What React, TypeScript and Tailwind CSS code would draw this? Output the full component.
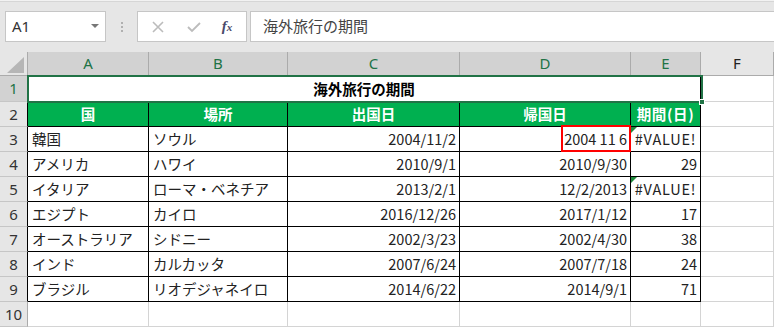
import React from "react";

const JP = "font-['Noto_Sans_CJK_JP',sans-serif]";

const colW = [121, 139, 172, 171, 70, 73];
const letters = ["A", "B", "C", "D", "E", "F"];

const data: string[][] = [
  ["韓国", "ソウル", "2004/11/2", "2004 11 6", "#VALUE!"],
  ["アメリカ", "ハワイ", "2010/9/1", "2010/9/30", "29"],
  ["イタリア", "ローマ・ベネチア", "2013/2/1", "12/2/2013", "#VALUE!"],
  ["エジプト", "カイロ", "2016/12/26", "2017/1/12", "17"],
  ["オーストラリア", "シドニー", "2002/3/23", "2002/4/30", "38"],
  ["インド", "カルカッタ", "2007/6/24", "2007/7/18", "24"],
  ["ブラジル", "リオデジャネイロ", "2014/6/22", "2014/9/1", "71"],
];

function RowHeader({ n, selected, black }: { n: number; selected?: boolean; black?: boolean }) {
  return (
    <div
      className={`w-[28px] shrink-0 flex items-center justify-center border-b border-b-[#c6c6c6] border-r font-['Noto_Sans',sans-serif] text-[15px] ${
        selected ? "bg-[#d2d2d2] text-[#217346]" : "bg-[#e6e6e6] text-[#333]"
      } ${black ? "border-r-black" : "border-r-[#ababab]"}`}
    >
      {n}
    </div>
  );
}

function DataRow({ n, row }: { n: number; row: string[] }) {
  return (
    <div className="flex h-[25px]">
      <RowHeader n={n} black />
      {row.map((t, i) => {
        const isErr = i === 4 && t.startsWith("#");
        const align = i < 2 ? "justify-start pl-[4px]" : isErr ? "justify-center tracking-[0.8px]" : "justify-end pr-[3px]";
        return (
          <div
            key={i}
            style={{ width: colW[i] }}
            className={`relative shrink-0 bg-white border-r border-b border-black flex items-center ${align} ${JP} text-[14.5px] text-[#222] whitespace-nowrap overflow-visible`}
          >
            {isErr && (
              <div className="absolute left-0 top-0 w-0 h-0 border-t-[6px] border-t-[#1e8a3c] border-r-[6px] border-r-transparent" />
            )}
            {t}
          </div>
        );
      })}
      <div style={{ width: colW[5] }} className="shrink-0 bg-white border-r border-b border-[#d4d4d4]" />
    </div>
  );
}

export default function App() {
  return (
    <div className="relative w-[774px] h-[327px] overflow-hidden bg-[#e6e6e6]">
      {/* top edge */}
      <div className="h-[1px] bg-[#f2f2f2]" />
      <div className="h-[1px] bg-[#d6d6d6]" />
      {/* toolbar */}
      <div className="h-[50px] flex items-start pt-[9px]">
        <div className="ml-[5px] w-[101px] h-[31px] bg-white border border-[#c6c6c6] flex items-center justify-between pl-[6px] pr-[6px]">
          <span className="font-['Noto_Sans',sans-serif] text-[15px] text-[#333]">A1</span>
          <svg width="8" height="5" viewBox="0 0 8 5">
            <path d="M0 0 L8 0 L4 4 Z" fill="#777" />
          </svg>
        </div>
        <div className="w-[31px] h-[31px] flex flex-col items-center justify-center gap-[2px]">
          <div className="w-[2px] h-[2px] bg-[#b0b0b0]" />
          <div className="w-[2px] h-[2px] bg-[#b0b0b0]" />
          <div className="w-[2px] h-[2px] bg-[#b0b0b0]" />
        </div>
        <div className="w-[110px] h-[31px] bg-white border border-[#c6c6c6] flex items-center">
          <div className="w-[38px] flex justify-center pl-[2px]">
            <svg width="12" height="12" viewBox="0 0 12 12">
              <path d="M1 1 L11 11 M11 1 L1 11" stroke="#bcbcbc" strokeWidth="1.6" />
            </svg>
          </div>
          <div className="w-[36px] flex justify-center">
            <svg width="14" height="12" viewBox="0 0 14 12">
              <path d="M1 6 L5 10 L13 2" stroke="#bcbcbc" strokeWidth="1.8" fill="none" />
            </svg>
          </div>
          <div className="w-[30px] flex justify-center">
            <span className="font-['Liberation_Serif',serif] italic text-[15px] text-[#4a4a6a] font-bold leading-none">
              f<span className="text-[11px]">x</span>
            </span>
          </div>
        </div>
        <div className="ml-[3px] flex-1 h-[31px] bg-white border border-r-0 border-[#c6c6c6] flex items-center pl-[12px]">
          <span className={`${JP} text-[15px] text-[#444]`}>海外旅行の期間</span>
        </div>
      </div>
      {/* column headers */}
      <div className="flex h-[24px]">
        <div className="relative w-[28px] shrink-0 bg-[#e6e6e6] border-r border-b border-[#ababab]">
          <svg className="absolute left-[7px] top-[5px]" width="17" height="16" viewBox="0 0 17 16">
            <path d="M17 0 L17 16 L0 16 Z" fill="#b6b6b6" />
          </svg>
        </div>
        {letters.map((l, i) => (
          <div
            key={l}
            style={{ width: colW[i] }}
            className={`shrink-0 flex items-center justify-center border-r border-b border-[#ababab] font-['Noto_Sans',sans-serif] text-[15px] ${
              i < 5 ? "bg-[#d2d2d2] text-[#217346]" : "bg-[#e6e6e6] text-[#222]"
            }`}
          >
            {l}
          </div>
        ))}
      </div>
      {/* row 1 */}
      <div className="flex h-[26px]">
        <RowHeader n={1} selected />
        <div
          style={{ width: 673 }}
          className={`shrink-0 bg-white border-r border-b border-black flex items-center justify-center ${JP} text-[14.5px] font-bold text-black`}
        >
          海外旅行の期間
        </div>
        <div style={{ width: colW[5] }} className="shrink-0 bg-white border-r border-b border-[#d4d4d4]" />
      </div>
      {/* row 2 headers */}
      <div className="flex h-[25px]">
        <RowHeader n={2} black />
        {["国", "場所", "出国日", "帰国日", "期間(日)"].map((t, i) => (
          <div
            key={t}
            style={{ width: colW[i] }}
            className={`shrink-0 bg-[#00b050] border-r border-b border-black flex items-center justify-center ${JP} text-[14.5px] font-bold text-white whitespace-nowrap ${i === 4 ? "tracking-[0.6px]" : ""}`}
          >
            {t}
          </div>
        ))}
        <div style={{ width: colW[5] }} className="shrink-0 bg-white border-r border-b border-[#d4d4d4]" />
      </div>
      {data.map((r, i) => (
        <DataRow key={i} n={i + 3} row={r} />
      ))}
      {/* row 10 */}
      <div className="flex h-[25px]">
        <RowHeader n={10} />
        {colW.map((w, i) => (
          <div key={i} style={{ width: w }} className="shrink-0 bg-white border-r border-b border-[#d4d4d4]" />
        ))}
      </div>

      {/* selection overlay */}
      <div className="absolute left-[27px] top-[75px] w-[676px] h-[28px] border-2 border-[#217346] pointer-events-none" />
      <div className="absolute left-[699px] top-[99px] w-[6px] h-[6px] bg-[#217346] border border-white" />
      {/* red rectangle shape */}
      <div className="absolute left-[561px] top-[125px] w-[70px] h-[27px] border-2 border-[#ff0000] pointer-events-none" />
    </div>
  );
}
